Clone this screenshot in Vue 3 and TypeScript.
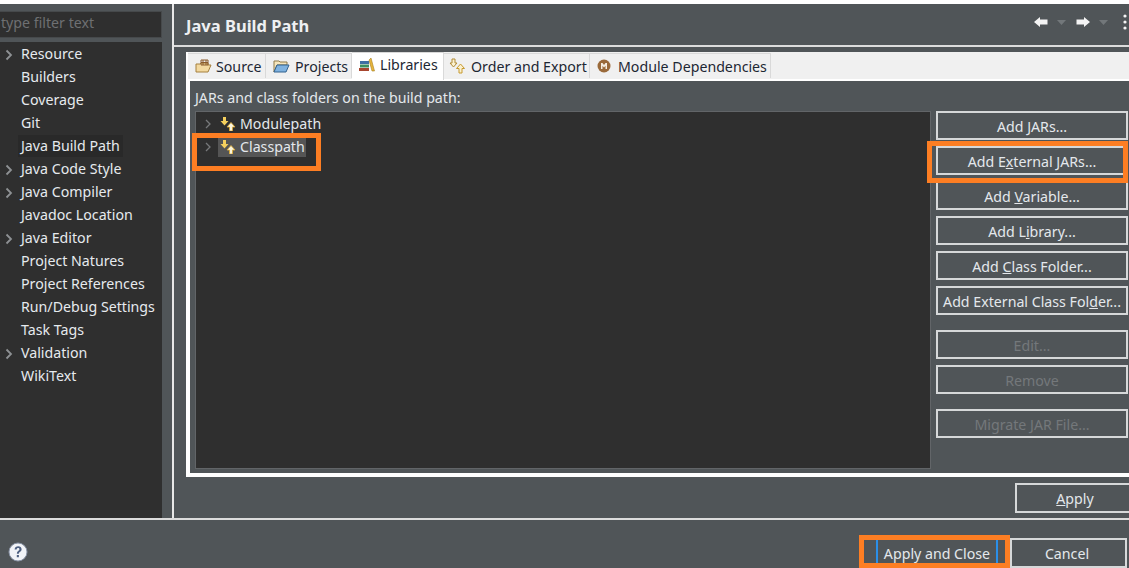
<script setup lang="ts">
type NavItem = { label: string; arrow?: boolean; current?: boolean }
type SideButton = { pre: string; key?: string; post?: string; off?: boolean; gap?: boolean }

const navItems: NavItem[] = [
  { label: 'Resource', arrow: true },
  { label: 'Builders' },
  { label: 'Coverage' },
  { label: 'Git' },
  { label: 'Java Build Path', current: true },
  { label: 'Java Code Style', arrow: true },
  { label: 'Java Compiler', arrow: true },
  { label: 'Javadoc Location' },
  { label: 'Java Editor', arrow: true },
  { label: 'Project Natures' },
  { label: 'Project References' },
  { label: 'Run/Debug Settings' },
  { label: 'Task Tags' },
  { label: 'Validation', arrow: true },
  { label: 'WikiText' },
]

const sideButtons: SideButton[] = [
  { pre: 'Add ', key: 'J', post: 'ARs...' },
  { pre: 'Add E', key: 'x', post: 'ternal JARs...' },
  { pre: 'Add ', key: 'V', post: 'ariable...' },
  { pre: 'Add L', key: 'i', post: 'brary...' },
  { pre: 'Add ', key: 'C', post: 'lass Folder...' },
  { pre: 'Add External Class Fol', key: 'd', post: 'er...' },
  { pre: 'Edit...', off: true, gap: true },
  { pre: 'Remove', off: true },
  { pre: 'Migrate JAR File...', off: true, gap: true },
]
</script>

<template>
  <div class="window">
    <div class="main">
      <aside class="side">
        <div class="filter">type filter text</div>
        <ul class="nav">
          <li v-for="item in navItems" :key="item.label" class="nav-row">
            <svg v-if="item.arrow" class="nav-arrow" width="8" height="12" viewBox="0 0 8 12">
              <path d="M1.5 1.5 6 6l-4.500 4.500" fill="none" stroke="#8e9194" stroke-width="1.800" />
            </svg>
            <span :class="['nav-label', { current: item.current }]">{{ item.label }}</span>
          </li>
        </ul>
      </aside>

      <section class="page">
        <header class="page-head">
          <h1>Java Build Path</h1>
          <div class="head-tools">
            <svg width="14" height="10" viewBox="0 0 14 10"><path d="M0 5 6 0v2.500h7.500v5H6V10z" fill="#f4f4f4" /></svg>
            <svg class="drop" width="9" height="5" viewBox="0 0 9 5"><path d="M0 0h9L4.500 5z" fill="#72777a" /></svg>
            <svg width="14" height="10" viewBox="0 0 14 10"><path d="M14 5 8 0v2.500H.5v5H8V10z" fill="#f4f4f4" /></svg>
            <svg class="drop" width="9" height="5" viewBox="0 0 9 5"><path d="M0 0h9L4.500 5z" fill="#72777a" /></svg>
            <svg class="dots" width="4" height="16" viewBox="0 0 4 16">
              <circle cx="2" cy="2" r="1.600" fill="#f4f4f4" />
              <circle cx="2" cy="8" r="1.600" fill="#f4f4f4" />
              <circle cx="2" cy="14" r="1.600" fill="#f4f4f4" />
            </svg>
          </div>
        </header>

        <div class="folder">
          <nav class="tabs">
            <div class="tab tab-source">
              <svg width="17" height="16" viewBox="0 0 17 16">
                <path d="M1 6h4l1-1h7v2h3l-3 7H1z" fill="#f3d9a0" stroke="#a5803f" />
                <path d="M6 2h7v5H6zM8 2v5M11 2v5M6 4.500h7" fill="none" stroke="#8a5a2b" />
              </svg>
              Source
            </div>
            <div class="tab tab-projects">
              <svg width="17" height="16" viewBox="0 0 17 16">
                <path d="M1 3h5l1 1h7v3H4l-3 7z" fill="#f6e6bd" stroke="#8f7b4b" />
                <path d="M4 7h12l-3 7H1z" fill="#7fb2e0" stroke="#33628f" />
              </svg>
              Projects
            </div>
            <div class="tab tab-libs active">
              <svg width="16" height="14" viewBox="0 0 16 14">
                <path d="M1 3h9v3H1z" fill="#3f6fa3" />
                <path d="M1 6.500h9v3H1z" fill="#3e8f5f" />
                <path d="M0 10h10v3H0z" fill="#a8462f" />
                <path d="M10 2 12 0l3.500 13h-2.500z" fill="#e7b53c" stroke="#a67f22" stroke-width=".6" />
              </svg>
              Libraries
            </div>
            <div class="tab tab-order">
              <svg width="17" height="16" viewBox="0 0 17 16">
                <path d="M3 1h3v4h2L4.500 9 1 5h2z" fill="#fbf1d0" stroke="#b08a35" />
                <path d="M11.500 6 15.500 10.500H13V15h-3v-4.500H7.500z" fill="#fbf1d0" stroke="#c79a2f" />
              </svg>
              Order and Export
            </div>
            <div class="tab tab-module">
              <svg width="14" height="14" viewBox="0 0 14 14">
                <circle cx="7" cy="7" r="6.500" fill="#9a6a3a" />
                <path d="M4 10V4h1.500L7 6l1.500-2H10v6H8.500V6.800L7 8.500 5.500 6.800V10z" fill="#f6eee2" />
              </svg>
              Module Dependencies
            </div>
          </nav>

          <div class="folder-body">
            <p class="build-label">JARs and class folders on the build path:</p>
            <div class="build-row">
              <div class="tree">
                <div class="tree-row">
                  <svg class="tree-arrow" width="6" height="10" viewBox="0 0 6 10"><path d="M1 1l4 4-4 4" fill="none" stroke="#77797b" stroke-width="1.300" /></svg>
                  <svg class="tree-icon" width="16" height="14" viewBox="0 0 16 14">
                    <path d="M3 0h3v4h2.500L4.500 8.500.5 4H3z" fill="#f4cf5d" />
                    <path d="M11 5.500 15 10h-2.500v4h-3v-4H7z" fill="#fbf5dc" stroke="#e0a92f" stroke-width=".8" />
                  </svg>
                  <span class="tree-text">Modulepath</span>
                </div>
                <div class="tree-row">
                  <svg class="tree-arrow" width="6" height="10" viewBox="0 0 6 10"><path d="M1 1l4 4-4 4" fill="none" stroke="#77797b" stroke-width="1.300" /></svg>
                  <div class="tree-selected">
                    <svg class="tree-icon" width="16" height="14" viewBox="0 0 16 14">
                      <path d="M3 0h3v4h2.500L4.500 8.500.5 4H3z" fill="#f4cf5d" />
                      <path d="M11 5.500 15 10h-2.500v4h-3v-4H7z" fill="#fbf5dc" stroke="#e0a92f" stroke-width=".8" />
                    </svg>
                    <span class="tree-text">Classpath</span>
                  </div>
                </div>
              </div>
              <div class="side-buttons">
                <button
                  v-for="btn in sideButtons"
                  :key="btn.pre"
                  :class="['btn', { off: btn.off, gap: btn.gap }]"
                >{{ btn.pre }}<u v-if="btn.key">{{ btn.key }}</u>{{ btn.post }}</button>
              </div>
            </div>
          </div>
        </div>

        <div class="apply-row">
          <button class="btn apply"><u>A</u>pply</button>
        </div>
      </section>
    </div>

    <footer class="foot">
      <svg class="help" width="20" height="20" viewBox="0 0 20 20">
        <circle cx="10" cy="10" r="9" fill="#f1f3f7" stroke="#8b95a8" stroke-width="1" />
        <path d="M6.600 7.400C6.800 5.300 8.300 4.200 10.200 4.200c2 0 3.400 1.200 3.400 3 0 1.500-.9 2.200-1.800 2.900-.7.500-1 .9-1 1.700H8.900c0-1.500.5-2.200 1.300-2.800.7-.5 1.200-.9 1.200-1.700 0-.8-.5-1.300-1.300-1.300-.9 0-1.400.6-1.500 1.500zM8.800 13h2.100v2.200H8.800z" fill="#4d5f80" />
      </svg>
      <div class="foot-buttons">
        <button class="btn primary">Apply and Close</button>
        <button class="btn cancel">Cancel</button>
      </div>
    </footer>

    <div class="mark mark-classpath"></div>
    <div class="mark mark-external"></div>
    <div class="mark mark-close"></div>
  </div>
</template>

<style scoped>
.window {
  position: relative;
  width: 1129px;
  height: 568px;
  overflow: hidden;
  box-sizing: border-box;
  border-top: 4px solid #fff;
  display: flex;
  flex-direction: column;
  background: #505558;
  color: #e4e8ec;
  font-family: "Noto Sans", "Open Sans", sans-serif;
  font-size: 14.2px;
}

.main {
  display: flex;
  height: 516px;
  flex: none;
  box-sizing: border-box;
  border-bottom: 2px solid #dcdcdc;
}

.side {
  width: 174px;
  box-sizing: border-box;
  border-right: 2px solid #e8e8e8;
  padding: 7px 10px 0 0;
  display: flex;
  flex-direction: column;
  gap: 4px;
}

.filter {
  height: 27px;
  box-sizing: border-box;
  background: #2f2f2f;
  border: 1px solid #46494b;
  border-left: 0;
  padding-left: 1px;
  line-height: 22px;
  color: #6e7072;
}

.nav {
  flex: 1;
  margin: 0;
  padding: 1px 0 0;
  list-style: none;
  background: #2f2f2f;
}

.nav-row {
  position: relative;
  height: 23px;
  line-height: 22px;
  padding-left: 21px;
  color: #e6eaee;
}

.nav-arrow {
  position: absolute;
  left: 5px;
  top: 6px;
}

.nav-label.current {
  display: inline-block;
  background: #292929;
  margin-left: -3px;
  padding: 0 3px;
}

.page {
  flex: 1;
  min-width: 0;
  display: flex;
  flex-direction: column;
}

.page-head {
  height: 43px;
  flex: none;
  box-sizing: border-box;
  border-bottom: 2px solid #dcdcdc;
  display: flex;
  align-items: center;
  justify-content: space-between;
  padding: 0 2px 0 12px;
}

.page-head h1 {
  margin: 2px 0 0;
  font-size: 16.500px;
  font-weight: 700;
  color: #eef0f2;
}

.head-tools {
  display: flex;
  align-items: center;
  gap: 9px;
  margin-bottom: 5px;
}

.drop {
  margin-right: 1px;
}

.dots {
  margin-left: 5px;
}

.folder {
  height: 425px;
  flex: none;
  margin: 5px 0 0 12px;
  box-sizing: border-box;
  border-left: 4px solid #fff;
  border-bottom: 4px solid #fff;
  display: flex;
  flex-direction: column;
}

.tabs {
  height: 29px;
  flex: none;
  box-sizing: border-box;
  background: #f0f0f0;
  border-bottom: 2px solid #fff;
  display: flex;
  align-items: flex-end;
  color: #1d2733;
  margin-left: -2px;
  padding-left: 0;
}

.tab {
  height: 25px;
  box-sizing: border-box;
  border: 1px solid #d9d9d9;
  border-bottom: 0;
  border-left: 0;
  display: flex;
  align-items: center;
  gap: 5px;
  white-space: nowrap;
  padding-left: 7px;
  margin-bottom: 1px;
}

.tab.active {
  height: 28px;
  background: #fff;
  margin-bottom: -1px;
  padding-bottom: 4px;
  position: relative;
}

.tab-source { width: 78px; gap: 4px; }
.tab-projects { width: 86px; }
.tab-libs { width: 92px; }
.tab-order { width: 146px; padding-left: 5px; }
.tab-module { width: 181px; gap: 7px; }

.folder-body {
  flex: 1;
  min-height: 0;
  padding: 7px 0 0 5px;
  display: flex;
  flex-direction: column;
}

.build-label {
  margin: 0 0 4px;
  height: 19px;
  line-height: 19px;
}

.build-row {
  display: flex;
  gap: 5px;
  height: 358px;
}

.tree {
  width: 736px;
  box-sizing: border-box;
  background: #2f2f2f;
  border: 1px solid #626568;
}

.tree-row {
  height: 23px;
  display: flex;
  align-items: center;
  padding-left: 9px;
}

.tree-arrow {
  margin-right: 9px;
}

.tree-icon {
  margin-right: 4px;
  flex: none;
}

.tree-selected {
  display: flex;
  align-items: center;
  height: 20px;
  background: #555;
  margin-left: -2px;
  padding: 0 1px 0 2px;
}

.side-buttons {
  width: 192px;
  display: flex;
  flex-direction: column;
  gap: 6px;
}

.btn {
  height: 29px;
  box-sizing: border-box;
  padding: 0;
  background: #505558;
  border: 2px solid #d6d8d9;
  border-radius: 0;
  color: #e4e8ec;
  font: inherit;
  white-space: nowrap;
}

.side-buttons .btn {
  padding-top: 2px;
}

.btn.off {
  color: #74787b;
}

.btn.gap {
  margin-top: 9px;
}

.apply-row {
  display: flex;
  justify-content: flex-end;
  padding-top: 6px;
}

.apply {
  width: 120px;
  height: 30px;
  margin-right: -6px;
  flex: none;
}

.foot {
  flex: 1;
  position: relative;
  display: flex;
  align-items: flex-start;
  justify-content: space-between;
}

.help {
  margin: 22px 0 0 8px;
}

.foot-buttons {
  display: flex;
  padding: 18px 2px 0 0;
}

.primary {
  width: 122px;
  height: 25px;
  margin-top: 2px;
  padding-top: 2px;
  border-width: 0 2px;
  border-color: #2b8fe8;
  margin-right: 12px;
}

.cancel {
  width: 117px;
  height: 30px;
  padding-right: 3px;
}

.mark {
  position: absolute;
  box-sizing: border-box;
  border: 5px solid #fd7e23;
}

.mark-classpath {
  left: 192px;
  top: 129px;
  width: 129px;
  height: 38px;
}

.mark-external {
  left: 927px;
  top: 137px;
  width: 201px;
  height: 42px;
}

.mark-close {
  left: 859px;
  top: 531px;
  width: 151px;
  height: 33px;
}
</style>
